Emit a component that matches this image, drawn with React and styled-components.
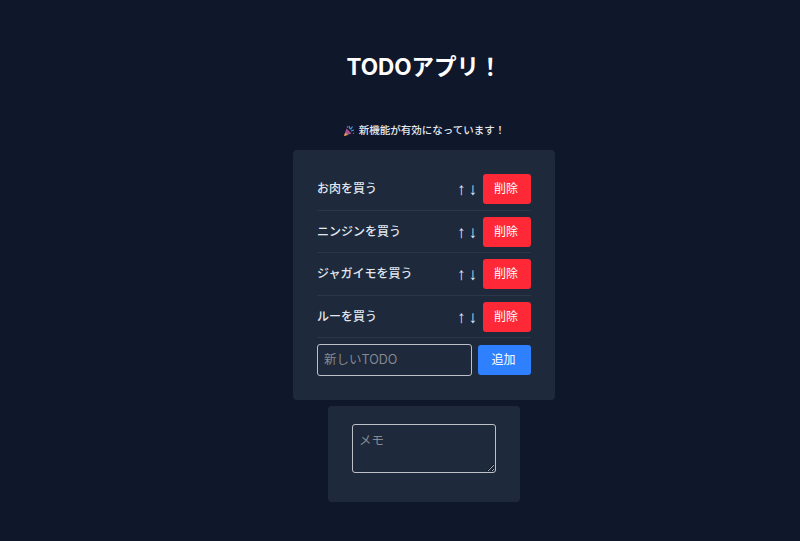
import React from "react";
import styled, { createGlobalStyle } from "styled-components";

const Global = createGlobalStyle`
  html, body { margin: 0; padding: 0; background: #0f172a; }
  body { font-family: Inter, "Noto Sans CJK JP", sans-serif; }
  ::placeholder { color: #858a92; opacity: 1; }
`;
const Page = styled.main`
  box-sizing: border-box;
  width: 800px;
  height: 541px;
  overflow: hidden;
  padding: 52px 0 0 48px;
  display: flex;
  flex-direction: column;
  align-items: center;
  background: #0f172a;
`;
const Title = styled.h1`
  margin: 0;
  height: 28px;
  line-height: 29px;
  font-size: 22.5px;
  font-weight: 700;
  color: #fff;
`;
const Notice = styled.p`
  margin: 44px 0 0;
  height: 14px;
  display: flex;
  align-items: center;
  gap: 4px;
  font-size: 10.5px;
  line-height: 14px;
  font-weight: 500;
  color: #e2e8f0;
`;
const Card = styled.section`
  box-sizing: border-box;
  width: 262px;
  height: 250px;
  margin-top: 12px;
  padding: 24px;
  background: #1e293b;
  border-radius: 4px;
`;
const Row = styled.div`
  box-sizing: border-box;
  height: 42.4px;
  padding-bottom: 6.5px;
  display: flex;
  align-items: flex-start;
  border-bottom: 1px solid #2b3648;
  & + & { padding-top: 6px; }
  &:first-child { height: 37px; }
`;
const Label = styled.span`
  flex: 1;
  font-size: 12px;
  font-weight: 500;
  line-height: 29px;
  color: #e2e8f0;
`;
const Arrows = styled.span`
  margin-right: 3px;
  font-size: 17px;
  line-height: 32px;
  color: #e8ecf5;
  font-family: "Liberation Sans", sans-serif;
  letter-spacing: 3px;
`;
const Button = styled.button`
  box-sizing: border-box;
  width: ${p => p.$w}px;
  height: 30px;
  border: 0;
  border-radius: 3px;
  background: ${p => p.$bg};
  color: #fff;
  font: 400 12px/28px Inter, "Noto Sans CJK JP", sans-serif;
  padding: 0 2px 0 0;
`;
const AddRow = styled.form`
  display: flex;
  align-items: center;
  justify-content: space-between;
  margin-top: 5.5px;
`;
const TodoInput = styled.input`
  box-sizing: border-box;
  width: 155px;
  height: 32px;
  padding: 0 6px;
  background: #1e293b;
  border: 1px solid #bcc1c8;
  border-radius: 3px;
  color: #fff;
  font: 400 12.5px Inter, "Noto Sans CJK JP", sans-serif;
`;
const MemoCard = styled.section`
  box-sizing: border-box;
  width: 192px;
  height: 96px;
  margin-top: 6px;
  padding: 18px 24px;
  background: #1e293b;
  border-radius: 4px;
`;
const Memo = styled.textarea`
  display: block;
  box-sizing: border-box;
  width: 144px;
  height: 49px;
  padding: 5px 6px;
  background: #1e293b;
  border: 1px solid #bcc1c8;
  border-radius: 3px;
  color: #fff;
  font: 400 12.5px Inter, "Noto Sans CJK JP", sans-serif;
`;

const Popper = () => (
  <svg width="12" height="12" viewBox="0 0 12 12" aria-hidden="true">
    <path d="M1 11 L3.5 3.5 L8.5 8.5 Z" fill="#a9508f" />
    <path d="M2.2 7.5 L5 10 L1 11 Z" fill="#e0a13c" />
    <path d="M6 1 l1 3 M9.5 1.5 l-2 3 M11 5 l-3 1" stroke="#4a90e2" strokeWidth="1.3" />
    <path d="M4 1.5 l1 1 M10 8 l1 .6" stroke="#d9534f" strokeWidth="1.2" />
  </svg>
);

const items = ["お肉を買う", "ニンジンを買う", "ジャガイモを買う", "ルーを買う"];

export default function App() {
  return (
    <Page>
      <Global />
      <Title>TODOアプリ！</Title>
      <Notice><Popper />新機能が有効になっています！</Notice>
      <Card>
        {items.map(t => (
          <Row key={t}>
            <Label>{t}</Label>
            <Arrows>↑↓</Arrows>
            <Button type="button" $w={48} $bg="#ff2837">削除</Button>
          </Row>
        ))}
        <AddRow>
          <TodoInput placeholder="新しいTODO" />
          <Button type="button" $w={53} $bg="#2f80ff">追加</Button>
        </AddRow>
      </Card>
      <MemoCard>
        <Memo placeholder="メモ" />
      </MemoCard>
    </Page>
  );
}
